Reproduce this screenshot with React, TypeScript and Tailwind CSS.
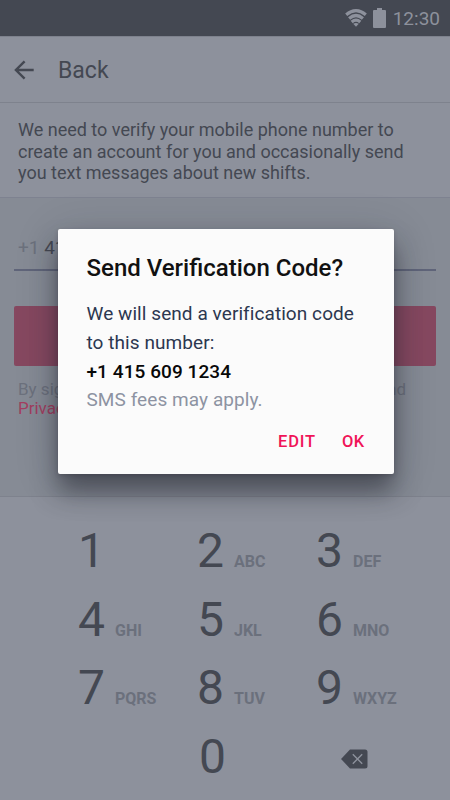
import React from "react";

const keys = [
  { digit: "1", letters: "" },
  { digit: "2", letters: "ABC" },
  { digit: "3", letters: "DEF" },
  { digit: "4", letters: "GHI" },
  { digit: "5", letters: "JKL" },
  { digit: "6", letters: "MNO" },
  { digit: "7", letters: "PQRS" },
  { digit: "8", letters: "TUV" },
  { digit: "9", letters: "WXYZ" },
];

const StatusBar = () => {
  return (
    <div className="h-9 bg-[#444852] flex items-center justify-end pr-[10px] text-[#8d919c]">
      <svg width="22" height="18" viewBox="0 0 22 18" fill="none" stroke="currentColor" strokeWidth="3.2">
        <path d="M1.2 5.7Q11 -2.4 20.8 5.7" />
        <path d="M4.1 9.5Q11 3.5 17.9 9.5" />
        <path d="M6.7 13Q11 9.4 15.3 13" />
        <path d="M8.2 14.8Q11 13 13.8 14.8L11 17.8Z" fill="currentColor" stroke="none" />
      </svg>
      <svg className="ml-[6px]" width="13" height="20" viewBox="0 0 13 20" fill="currentColor">
        <path d="M4 0h5v2h3a1 1 0 0 1 1 1v16a1 1 0 0 1-1 1H1a1 1 0 0 1-1-1V3a1 1 0 0 1 1-1h3z" />
      </svg>
      <span className="ml-[7px] pt-px text-[19px] leading-9">12:30</span>
    </div>
  );
};

const Keypad = () => {
  return (
    <div className="h-[304px] border-t border-[#7e828d] pl-[78px] pt-[20px]">
      <div className="grid grid-cols-[119px_119px_133px] auto-rows-[68.7px]">
        {keys.map((key) => (
          <div key={key.digit} className="flex items-baseline">
            <span className="w-[37px] text-[48px] leading-[68px]">{key.digit}</span>
            <span className="text-[16px] font-bold text-[#6b707c]">{key.letters}</span>
          </div>
        ))}
        <div></div>
        <span className="pl-[2px] text-[48px] leading-[68px]">0</span>
        <div className="pt-[26px] pl-[25px]">
          <svg width="27" height="20" viewBox="0 0 27 20">
            <path d="M9 0.5H24a2.5 2.5 0 0 1 2.5 2.5V17a2.5 2.5 0 0 1-2.5 2.5H9L0.5 10.5V9.5Z" fill="#444852" />
            <path d="M11.8 5.3l9.4 9.4M21.2 5.3l-9.4 9.4" stroke="#8d919c" strokeWidth="1.4" />
          </svg>
        </div>
      </div>
    </div>
  );
};

const ConfirmDialog = () => {
  return (
    <div className="absolute left-[57.5px] top-[229px] w-[336px] h-[245px] rounded-[2px] bg-[#fbfbfb] pl-[29px] pr-[29px] pt-[23px] shadow-[0_18px_24px_rgba(30,32,42,0.5),0_6px_44px_rgba(30,32,42,0.18),0_2px_4px_rgba(30,32,42,0.2)]">
      <h2 className="text-[24px] leading-[32px] font-medium text-[#111111] whitespace-nowrap">
        Send Verification Code?
      </h2>
      <div className="mt-[16px] text-[19px] leading-[28.8px] tracking-[0.07px] text-[#2c3750] whitespace-nowrap">
        <p>We will send a verification code</p>
        <p>to this number:</p>
        <p className="font-medium text-[#080808]">+1 415 609 1234</p>
        <p className="text-[#8d93a2]">SMS fees may apply.</p>
      </div>
      <div className="mt-[15px] flex justify-end gap-[26px] text-[16.5px] leading-6 font-medium text-[#f01458]">
        <button className="tracking-[0.8px]">EDIT</button>
        <button className="tracking-[0.4px]">OK</button>
      </div>
    </div>
  );
};

const App = () => {
  return (
    <div className="relative w-[450px] h-[800px] overflow-hidden bg-[#8d919c] text-[#444852] font-['Roboto',sans-serif]">
      <StatusBar />
      <div className="h-[67px] border-y border-[#7e828d] flex items-center pl-[14px]">
        <svg width="21" height="20" viewBox="0 0 21 20" fill="none" stroke="currentColor" strokeWidth="2.4">
          <path d="M19.7 10H2.2M10.6 1.3L1.9 10l8.7 8.7" />
        </svg>
        <span className="ml-[23px] pt-[3px] text-[23px]">Back</span>
      </div>
      <p className="h-[94px] pt-[16px] pl-[18px] text-[18px] leading-[21.6px] whitespace-nowrap">
        We need to verify your mobile phone number to
        <br />
        create an account for you and occasionally send
        <br />
        you text messages about new shifts.
      </p>
      <div className="h-[299px] border-t border-[#7e8290] bg-[#868b95] px-[14px] pt-[32px]">
        <div className="h-[41px] border-b-2 border-[#60657a] pl-1 text-[19px] leading-[36px]">
          <span className="text-[#6c717d]">+1</span> 41
        </div>
        <div className="mt-[35px] h-[60px] rounded-[2px] bg-[#864860]"></div>
        <p className="mt-[14px] pl-1 flex justify-between pr-[30px] text-[17px] leading-[19px] text-[#6c717d]">
          <span>By sig</span>
          <span>and</span>
        </p>
        <p className="pl-1 text-[17px] leading-[19px] text-[#a33e60]">Privac</p>
      </div>
      <Keypad />
      <ConfirmDialog />
    </div>
  );
};

export default App;
